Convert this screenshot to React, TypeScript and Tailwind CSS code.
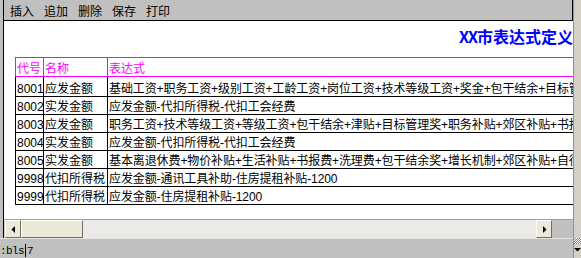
const rows = [
  {
    code: "8001",
    name: "应发金额",
    expr: "基础工资+职务工资+级别工资+工龄工资+岗位工资+技术等级工资+奖金+包干结余+目标管理奖+职务补贴",
  },
  { code: "8002", name: "实发金额", expr: "应发金额-代扣所得税-代扣工会经费" },
  {
    code: "8003",
    name: "应发金额",
    expr: "职务工资+技术等级工资+等级工资+包干结余+津贴+目标管理奖+职务补贴+郊区补贴+书报费+洗理费",
  },
  { code: "8004", name: "实发金额", expr: "应发金额-代扣所得税-代扣工会经费" },
  {
    code: "8005",
    name: "实发金额",
    expr: "基本离退休费+物价补贴+生活补贴+书报费+洗理费+包干结余奖+增长机制+郊区补贴+自行车补贴",
  },
  { code: "9998", name: "代扣所得税", expr: "应发金额-通讯工具补助-住房提租补贴-1200" },
  { code: "9999", name: "代扣所得税", expr: "应发金额-住房提租补贴-1200" },
];

const menu = ["插入", "追加", "删除", "保存", "打印"];

const Arrow = ({ dir }: { dir: "left" | "right" | "down" }) => (
  <svg width="7" height="7" viewBox="0 0 7 7" aria-hidden>
    {dir === "left" && <polygon points="5,0 5,7 1.5,3.5" fill="#000" />}
    {dir === "right" && <polygon points="2,0 2,7 5.5,3.5" fill="#000" />}
    {dir === "down" && <polygon points="0,2 7,2 3.5,5.5" fill="#000" />}
  </svg>
);

const ScrollButton = ({ dir }: { dir: "left" | "right" }) => (
  <div className="flex h-[18px] w-[16px] items-center justify-center border border-t-white border-l-white border-r-[#716f64] border-b-[#716f64] bg-[#ece9d8]">
    <Arrow dir={dir} />
  </div>
);

export default function App() {
  return (
    <div className="flex h-[258px] w-[581px] overflow-hidden bg-[#c0c0c0] font-['Liberation_Sans','Noto_Sans_CJK_SC',sans-serif] text-[12px] text-black">
      <div className="flex w-[573px] flex-col">
        <div className="flex h-[238px]">
          <div className="w-[3px] bg-[#c0c0c0]" />
          <div className="flex w-[570px] flex-col border-l border-black">
            {/* toolbar */}
            <div className="flex h-[21px] gap-[10px] border-r border-b border-black bg-[#c0c0c0] pl-[6px] pt-[6px] leading-[12px]">
              {menu.map((m) => (
                <span key={m}>{m}</span>
              ))}
            </div>

            <div className="flex flex-1 flex-col overflow-hidden bg-white">
              <div className="whitespace-nowrap pl-[455px] pt-[7px] font-['Noto_Sans_CJK_SC',sans-serif] text-[16px] leading-[16px] font-bold text-[#0000ff]">
                <span className="tracking-[-1px]">XX</span>市表达式定义
              </div>

              {/* grid */}
              <div className="ml-[11px] mt-[13px] w-[700px]">
                <div className="flex h-[20px] border-t border-b border-l border-[#ff00ff] text-[#ff00ff]">
                  <div className="flex w-[28px] items-end border-r border-[#ff00ff] pl-[1px] leading-[14px]">代号</div>
                  <div className="flex w-[64px] items-end border-r border-[#ff00ff] pl-[1px] leading-[14px]">名称</div>
                  <div className="flex flex-1 items-end pl-[1px] leading-[14px]">表达式</div>
                </div>
                {rows.map((r, i) => (
                  <div
                    key={r.code}
                    className={`flex border-b border-l border-black ${i === 0 ? "h-[20px]" : "h-[18px]"}`}
                  >
                    <div className="flex w-[28px] items-end border-r border-black pl-[1px] leading-[14px]">{r.code}</div>
                    <div className="flex w-[64px] items-end whitespace-nowrap border-r border-black pl-[1px] leading-[14px]">
                      {r.name}
                    </div>
                    <div className="flex flex-1 items-end whitespace-nowrap pl-[1px] leading-[14px] tracking-[-0.1px]">
                      {r.expr}
                    </div>
                  </div>
                ))}
              </div>

              <div className="flex-1" />

              {/* horizontal scrollbar */}
              <div className="flex h-[19px] border-t border-[#a0a0a0] bg-[#c0c0c0]">
                <div className="w-[1px] bg-[#d4d0c8]" />
                <div className="flex w-[547px] bg-[#eceae6]">
                  <ScrollButton dir="left" />
                  <div className="h-[18px] w-[62px] border border-t-white border-l-white border-r-[#716f64] border-b-[#716f64] bg-[#ece9d8]" />
                  <div className="flex-1" />
                  <ScrollButton dir="right" />
                </div>
                <div className="flex-1" />
              </div>
            </div>
          </div>
        </div>

        {/* status bar */}
        <div className="flex h-[20px] items-start border-t border-[#e4e4e4] bg-[#c0c0c0] font-['Liberation_Mono',monospace] text-[11px] leading-[12px]">
          <span className="pt-[6px] tracking-[-0.6px]">:bls</span>
          <span className="ml-[1px] mt-[5px] h-[13px] border-l border-black" />
          <span className="ml-[1px] pt-[6px]">7</span>
        </div>
      </div>

      {/* outer vertical scrollbar edge */}
      <div className="flex w-[8px] flex-col border-l border-[#909090] bg-[#d4d0c8]">
        <div className="flex-1" />
        <div className="h-[6px] bg-[repeating-conic-gradient(#808080_0_25%,#ffffff_0_50%)] bg-[length:2px_2px]" />
        <div className="flex h-[14px] items-start justify-end pt-[2px]">
          <Arrow dir="down" />
        </div>
      </div>
    </div>
  );
}
